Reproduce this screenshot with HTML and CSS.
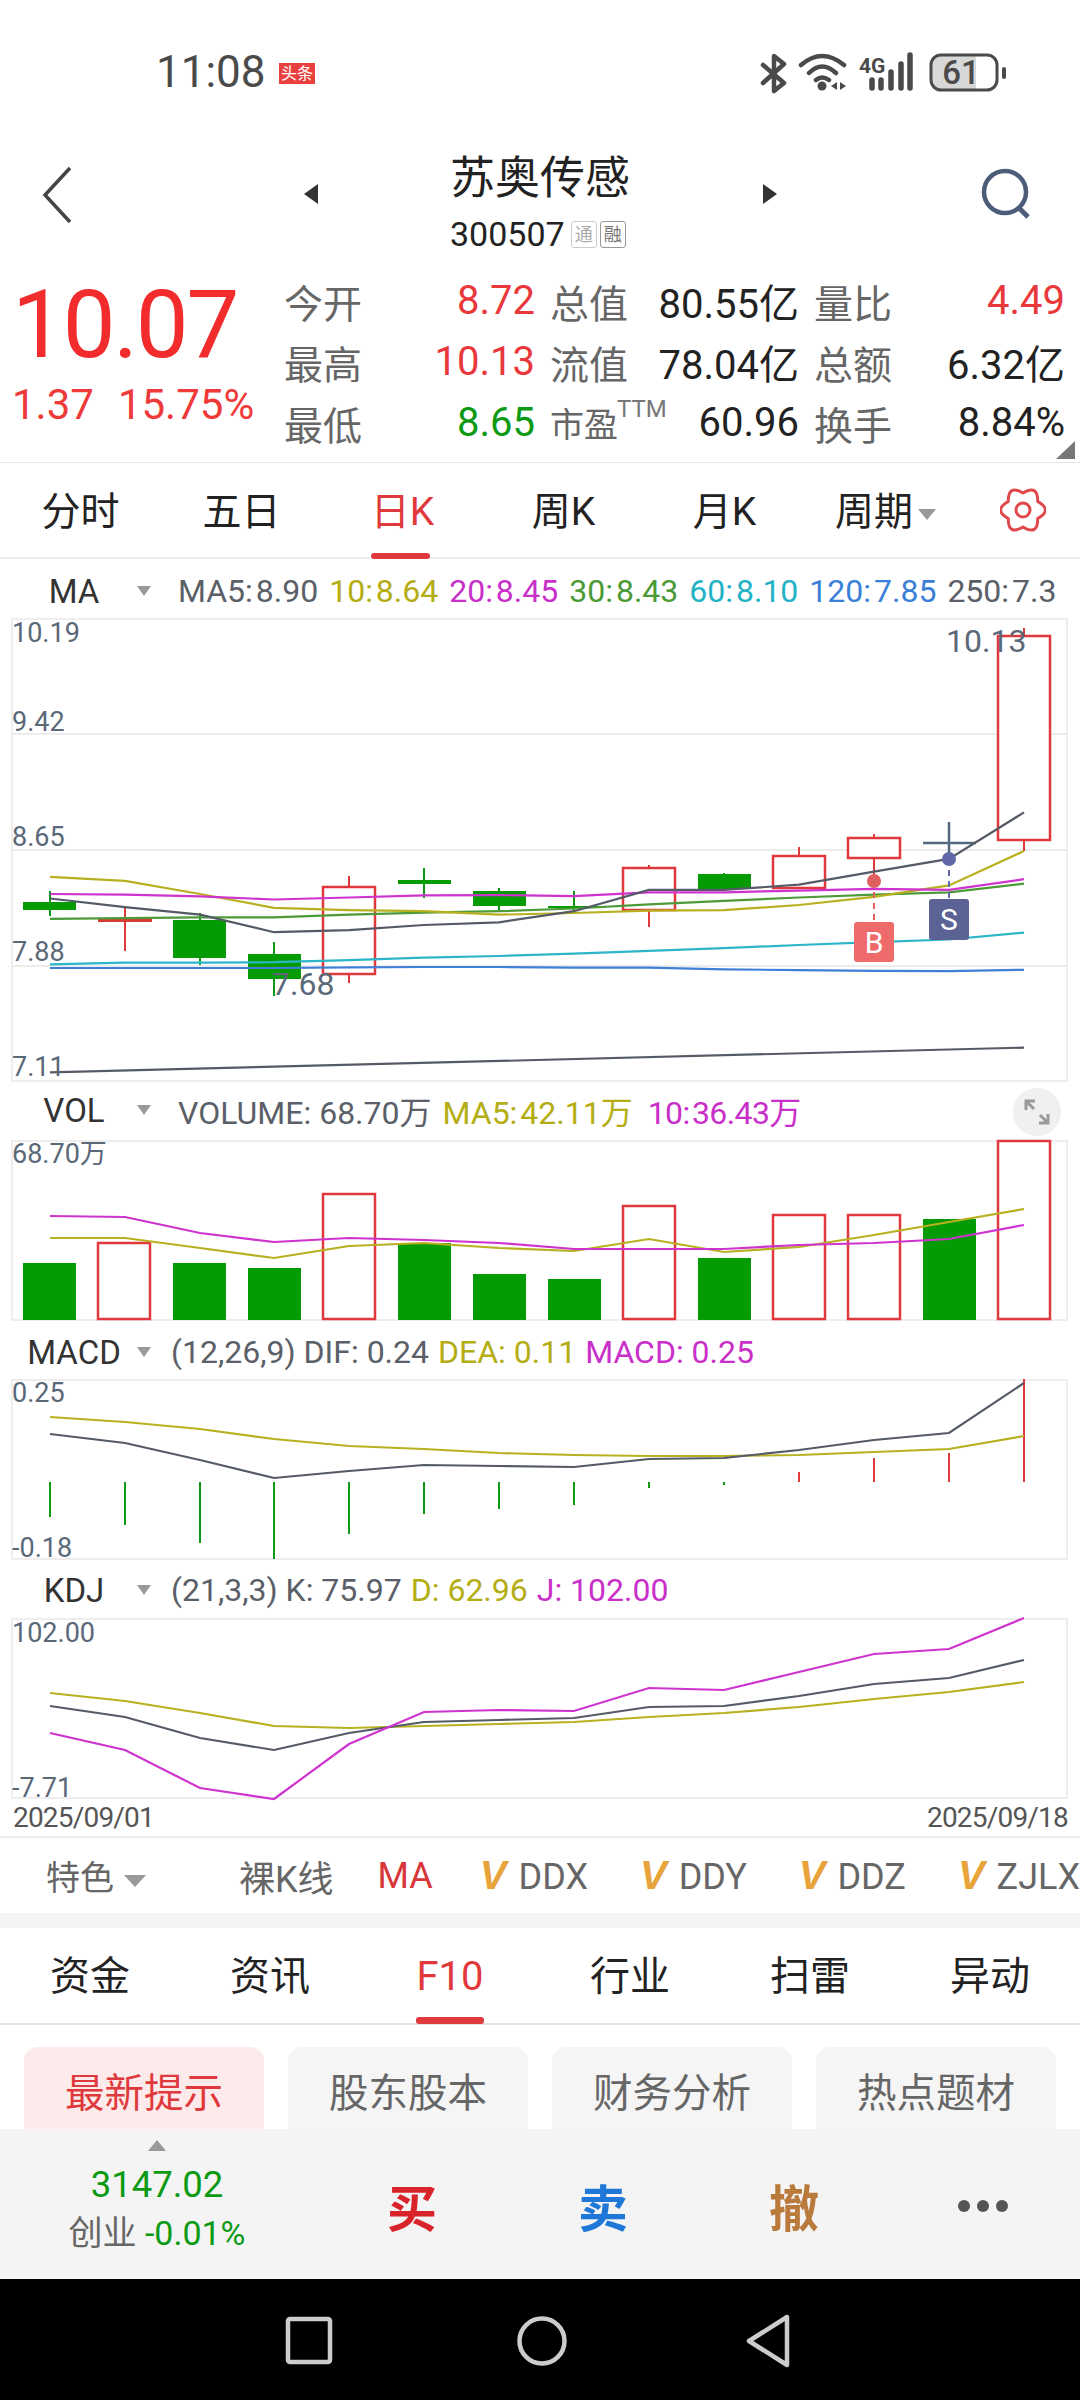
FILE: index.html
```html
<!DOCTYPE html>
<html lang="zh-CN">
<head>
<meta charset="UTF-8">
<title>苏奥传感</title>
<link rel="stylesheet" href="styles.css">
</head>
<body>

<div class="statusbar">
    <span class="clock">11:08</span>
    <span class="toutiao">头条</span>
    <svg class="status-icons" width="250" height="50" viewBox="0 0 250 50">
        <path d="M3 15L24 33L14 41V6L24 14L3 33" fill="none" stroke="#4a4a4a" stroke-width="4.5" stroke-linecap="round" stroke-linejoin="round"/>
        <path d="M41 15Q62 -3 84 15M49 23Q62 10 76 23M56 30Q62 25 69 30" fill="none" stroke="#4a4a4a" stroke-width="4.5" stroke-linecap="round"/>
        <circle cx="62" cy="36" r="4.5" fill="#4a4a4a"/>
        <path d="M77 32V40L71 36ZM80 32V40L86 36Z" fill="#4a4a4a"/>
        <text class="net-text" x="99" y="23">4G</text>
        <path d="M112 30V38M121 30V38M131 22V38M141 14V38M150 5V38" fill="none" stroke="#4a4a4a" stroke-width="5.5" stroke-linecap="round"/>
        <path d="M180 5.5H216V39.5H180A9 9 0 0 1 171 30.5V14.5A9 9 0 0 1 180 5.5Z" fill="#d8d8d8"/>
        <rect x="171" y="5" width="66" height="35" rx="10" fill="none" stroke="#4a4a4a" stroke-width="3"/>
        <text class="batt-text" x="201" y="34">61</text>
        <rect x="242" y="17" width="4" height="12" rx="2" fill="#4a4a4a"/>
    </svg>
</div>

<div class="titlebar">
    <svg class="back" width="32" height="58" viewBox="0 0 32 58"><path d="M29 2L4 29L29 56" fill="none" stroke="#444" stroke-width="3.5"/></svg>
    <span class="arrow-left"></span>
    <div class="stock-name">
        <div class="name">苏奥传感</div>
        <div class="code">300507<span class="tag">通</span><span class="tag tag-dark">融</span></div>
    </div>
    <span class="arrow-right"></span>
    <svg class="search" width="56" height="56" viewBox="0 0 56 56"><circle cx="27" cy="26" r="21" fill="none" stroke="#4d5c78" stroke-width="4.5"/><path d="M40 41L50 51" stroke="#4d5c78" stroke-width="5" fill="none"/></svg>
</div>

<div class="quote">
    <div class="price-box">
        <div class="price">10.07</div>
        <div class="change"><span>1.37</span><span>15.75%</span></div>
    </div>
    <div class="stats">
        <span class="lab">今开</span><span class="val red">8.72</span>
        <span class="lab">总值</span><span class="val">80.55亿</span>
        <span class="lab">量比</span><span class="val red">4.49</span>
        <span class="lab">最高</span><span class="val red">10.13</span>
        <span class="lab">流值</span><span class="val">78.04亿</span>
        <span class="lab">总额</span><span class="val">6.32亿</span>
        <span class="lab">最低</span><span class="val green">8.65</span>
        <span class="lab lab-ttm">市盈<sup>TTM</sup></span><span class="val">60.96</span>
        <span class="lab">换手</span><span class="val">8.84%</span>
    </div>
    <span class="corner"></span>
</div>

<div class="period-tabs">
    <span class="tab">分时</span>
    <span class="tab">五日</span>
    <span class="tab tab-on">日K</span>
    <span class="tab">周K</span>
    <span class="tab">月K</span>
    <span class="tab">周期<i class="tri tri-tab"></i></span>
    <svg class="gear" width="46" height="46" viewBox="0 0 46 46">
        <path d="M23 6Q38 -3 37.7 14.5Q53 23 37.7 31.5Q38 49 23 40Q8 49 8.3 31.5Q-7 23 8.3 14.5Q8 -3 23 6Z" fill="none" stroke="#e0484c" stroke-width="3" stroke-linejoin="round"/>
        <circle cx="23" cy="23" r="7" fill="none" stroke="#e0484c" stroke-width="3"/>
    </svg>
</div>

<div class="legend legend-ma">
    <span class="ind">MA</span><i class="tri"></i>
    <div class="vals vals-close">
        <span class="c-gray">MA5: 8.90</span>
        <span class="c-olive">10: 8.64</span>
        <span class="c-pink">20: 8.45</span>
        <span class="c-grn">30: 8.43</span>
        <span class="c-cyan">60: 8.10</span>
        <span class="c-blue">120: 7.85</span>
        <span class="c-gray">250: 7.3</span>
    </div>
</div>
<svg class="chart" width="1080" height="464" viewBox="0 618 1080 464">
    <rect class="frame" x="12" y="619" width="1055" height="462"/>
    <path class="grid" d="M12 734H1067M12 850H1067M12 966H1067"/>

    <path class="wick-g" d="M50 891V916M200 913V965M274 942V996M424 868V898M499 888V911M574 891V912M724 873V889"/>
    <path class="wick-r" d="M125 907V951M349 876V887M349 974V983M649 865V868M649 910V927M799 847V856M874 834V838M874 858V881M1024 628V636M1024 840V851"/>
    <g class="fill-g">
        <rect x="23" y="902" width="53" height="8"/>
        <rect x="173" y="920" width="53" height="38"/>
        <rect x="248" y="954" width="53" height="25"/>
        <rect x="398" y="880" width="53" height="4"/>
        <rect x="473" y="891" width="53" height="15"/>
        <rect x="548" y="906" width="53" height="2"/>
        <rect x="698" y="874" width="53" height="15"/>
    </g>
    <rect x="98" y="919" width="54" height="3" fill="#d93a32"/>
    <g class="hollow">
        <rect x="323" y="887" width="52" height="87"/>
        <rect x="623" y="868" width="52" height="42"/>
        <rect x="773" y="856" width="52" height="32"/>
        <rect x="848" y="838" width="52" height="20"/>
        <rect x="998" y="636" width="52" height="204"/>
    </g>
    <path d="M949 822V859M923 843H976" stroke="#566782" stroke-width="2.5" fill="none"/>

    <polyline class="ln l-cyan" points="50,964.3 125,962.6 200,962.6 274,962.2 349,960.1 424,957.7 499,956 574,953.6 649,950.8 724,948.1 799,945 874,942.2 949,939.5 1024,932.6"/>
    <polyline class="ln l-blue" points="50,968 125,968 200,968 274,968 349,967.4 424,967 499,967 574,967.7 649,967.7 724,969.4 799,970.1 874,970.8 949,971.2 1024,969.8"/>
    <polyline class="ln l-dark" points="50,1072.4 1024,1047.6"/>
    <polyline class="ln l-grn" points="50,918.8 125,918.1 200,917.4 274,917.4 349,914.7 424,912.6 499,911.2 574,908.5 649,904.4 724,900.9 799,897.5 874,894.7 949,892.3 1024,883.7"/>
    <polyline class="ln l-olive" points="50,876.8 125,880.9 200,894 274,907.8 349,910.2 424,911.2 499,914.7 574,913 649,910.6 724,910.2 799,905 874,896.8 949,885.4 1024,851"/>
    <polyline class="ln l-pink" points="50,894 125,894.7 200,896.4 274,899.5 349,897.5 424,895.4 499,895.1 574,896.1 649,892.3 724,892.3 799,890.6 874,888.9 949,889.9 1024,879.2"/>
    <polyline class="ln l-dark" points="50,898.5 125,907.1 200,914.7 274,932.2 349,930.2 424,925 499,922.3 574,911.2 649,889.9 724,889.9 799,884.7 874,871.6 949,858.9 1024,812.4"/>

    <path d="M874 881V922" stroke="#e0605f" stroke-width="2" stroke-dasharray="6 5" fill="none"/>
    <ellipse cx="874" cy="881" rx="7" ry="7" fill="#e0605f"/>
    <rect x="854" y="922" width="40" height="40" rx="3" fill="#ef6b6b"/>
    <text class="mark" x="874" y="953">B</text>
    <path d="M949 859V899" stroke="#6068a8" stroke-width="2" stroke-dasharray="6 5" fill="none"/>
    <ellipse cx="949" cy="859" rx="7" ry="7" fill="#6068a8"/>
    <rect x="929" y="899" width="40" height="41" rx="3" fill="#5b6294"/>
    <text class="mark" x="949" y="930">S</text>

    <text class="axis" x="12" y="642">10.19</text>
    <text class="axis" x="12" y="731">9.42</text>
    <text class="axis" x="12" y="846">8.65</text>
    <text class="axis" x="12" y="961">7.88</text>
    <text class="axis" x="12" y="1076">7.11</text>
    <text class="peak" x="946" y="652">10.13</text>
    <text class="peak" x="272" y="995">7.68</text>
</svg>

<div class="legend legend-vol">
    <span class="ind">VOL</span><i class="tri"></i>
    <div class="vals vals-close vals-vol">
        <span class="c-gray">VOLUME: 68.70万</span>
        <span class="c-olive">MA5: 42.11万</span>
        <span class="c-pink">10: 36.43万</span>
    </div>
    <span class="expand">
        <svg width="28" height="28" viewBox="0 0 28 28"><path d="M3 12V3H12M3 3L11 11M25 16V25H16M25 25L17 17" fill="none" stroke="#999" stroke-width="3"/></svg>
    </span>
</div>
<svg class="chart" width="1080" height="181" viewBox="0 1140 1080 181">
    <rect class="frame" x="12" y="1141" width="1055" height="179"/>
    <g class="fill-g">
        <rect x="23" y="1263" width="53" height="57"/>
        <rect x="173" y="1263" width="53" height="57"/>
        <rect x="248" y="1268" width="53" height="52"/>
        <rect x="398" y="1243" width="53" height="77"/>
        <rect x="473" y="1274" width="53" height="46"/>
        <rect x="548" y="1279" width="53" height="41"/>
        <rect x="698" y="1258" width="53" height="62"/>
        <rect x="923" y="1219" width="53" height="101"/>
    </g>
    <g class="hollow">
        <rect x="98" y="1243" width="52" height="76"/>
        <rect x="323" y="1194" width="52" height="125"/>
        <rect x="623" y="1206" width="52" height="113"/>
        <rect x="773" y="1215" width="52" height="104"/>
        <rect x="848" y="1215" width="52" height="104"/>
        <rect x="998" y="1141" width="52" height="178"/>
    </g>
    <polyline class="ln l-olive" points="50,1238 125,1238 200,1248 274,1258 349,1246 424,1243 499,1248 574,1251 649,1239 724,1252 799,1247 874,1235 949,1222 1024,1209"/>
    <polyline class="ln l-pink" points="50,1216 125,1217 200,1233 274,1242 349,1238 424,1240 499,1243 574,1249 649,1249 724,1249 799,1245 874,1243 949,1239 1024,1225"/>
    <text class="axis" x="12" y="1163">68.70万</text>
</svg>

<div class="legend legend-macd">
    <span class="ind">MACD</span><i class="tri"></i>
    <div class="vals vals-tight">
        <span class="c-gray">(12,26,9) DIF: 0.24</span>
        <span class="c-olive">DEA: 0.11</span>
        <span class="c-pink">MACD: 0.25</span>
    </div>
</div>
<svg class="chart" width="1080" height="181" viewBox="0 1379 1080 181">
    <rect class="frame" x="12" y="1380" width="1055" height="179"/>
    <path class="bar-g" d="M50 1482V1517M125 1482V1525M200 1482V1543M274 1482V1559M349 1482V1534M424 1482V1514M499 1482V1509M574 1482V1505M649 1482V1488M724 1482V1485"/>
    <path class="bar-r" d="M799 1482V1472M874 1482V1458M949 1482V1453M1024 1482V1379"/>
    <polyline class="ln l-olive" points="50,1417 125,1422 200,1429 274,1439 349,1446 424,1449 499,1453 574,1455 649,1456 724,1456 799,1455 874,1452 949,1449 1024,1436"/>
    <polyline class="ln l-dark" points="50,1434 125,1443 200,1460 274,1478 349,1471 424,1465 499,1466 574,1467 649,1459 724,1458 799,1450 874,1440 949,1433 1024,1383"/>
    <text class="axis" x="12" y="1402">0.25</text>
    <text class="axis" x="12" y="1557">-0.18</text>
</svg>

<div class="legend legend-kdj">
    <span class="ind">KDJ</span><i class="tri"></i>
    <div class="vals vals-tight">
        <span class="c-gray">(21,3,3) K: 75.97</span>
        <span class="c-olive">D: 62.96</span>
        <span class="c-pink">J: 102.00</span>
    </div>
</div>
<svg class="chart" width="1080" height="181" viewBox="0 1618 1080 181">
    <rect class="frame" x="12" y="1619" width="1055" height="179"/>
    <polyline class="ln l-olive" points="50,1693 125,1701 200,1713 274,1726 349,1728 424,1726 499,1724 574,1722 649,1717 724,1713 799,1707 874,1699 949,1692 1024,1682"/>
    <polyline class="ln l-dark" points="50,1706 125,1717 200,1738 274,1750 349,1733 424,1722 499,1720 574,1718 649,1707 724,1706 799,1696 874,1684 949,1678 1024,1660"/>
    <polyline class="ln l-pink" points="50,1733 125,1750 200,1788 274,1799 349,1744 424,1712 499,1710 574,1711 649,1688 724,1690 799,1672 874,1654 949,1649 1024,1618"/>
    <text class="axis" x="12" y="1642">102.00</text>
    <text class="axis" x="12" y="1797">-7.71</text>
</svg>

<div class="dates"><span>2025/09/01</span><span>2025/09/18</span></div>

<div class="features">
    <span class="feat-main">特色<i class="tri tri-feat"></i></span>
    <span class="feat-sep"></span>
    <span class="feat feat-plain">裸K线</span>
    <span class="feat feat-on">MA</span>
    <span class="feat"><b class="vip">V</b>DDX</span>
    <span class="feat"><b class="vip">V</b>DDY</span>
    <span class="feat"><b class="vip">V</b>DDZ</span>
    <span class="feat"><b class="vip">V</b>ZJLX</span>
</div>

<div class="band"></div>

<div class="info-tabs">
    <span class="itab">资金</span>
    <span class="itab">资讯</span>
    <span class="itab itab-on">F10</span>
    <span class="itab">行业</span>
    <span class="itab">扫雷</span>
    <span class="itab">异动</span>
</div>

<div class="subtabs">
    <span class="sub sub-on">最新提示</span>
    <span class="sub">股东股本</span>
    <span class="sub">财务分析</span>
    <span class="sub">热点题材</span>
</div>

<div class="tradebar">
    <div class="index-box">
        <i class="tri-up"></i>
        <div class="idx-val">3147.02</div>
        <div class="idx-sub">创业 <span>-0.01%</span></div>
    </div>
    <span class="act act-buy">买</span>
    <span class="act act-sell">卖</span>
    <span class="act act-undo">撤</span>
    <span class="more"><i></i><i></i><i></i></span>
</div>

<div class="navbar">
    <svg width="48" height="50" viewBox="0 0 48 50"><rect x="3" y="3" width="42" height="43" rx="2" fill="none" stroke="#ccc" stroke-width="4.5"/></svg>
    <svg width="52" height="52" viewBox="0 0 52 52"><circle cx="26" cy="26" r="22.5" fill="none" stroke="#ccc" stroke-width="4.5"/></svg>
    <svg class="nav-back" width="46" height="54" viewBox="0 0 46 54"><path d="M42 3V51L4 27Z" fill="none" stroke="#ccc" stroke-width="4.5" stroke-linejoin="round"/></svg>
</div>

</body>
</html>
```

FILE: styles.css
```css
* {
    box-sizing: border-box;
}
body {
    margin: 0;
    width: 1080px;
    height: 2400px;
    overflow: hidden;
    background-color: #fff;
    font-family: Roboto, "Noto Sans CJK SC", sans-serif;
    color: #222;
}
i {
    font-style: normal;
}

/* status bar */
.statusbar {
    height: 130px;
    padding: 14px 0 0 156px;
    display: flex;
    align-items: center;
}
.clock {
    font-size: 44px;
    color: #4a4a4a;
    width: 123px;
}
.toutiao {
    width: 36px;
    height: 21px;
    line-height: 21px;
    margin-top: 3px;
    background-color: #e8403f;
    color: #fff;
    font-size: 16px;
    text-align: center;
}
.status-icons {
    margin-left: 445px;
    margin-top: 6px;
}
.net-text {
    font-size: 21px;
    font-weight: 700;
    fill: #4a4a4a;
}
.batt-text {
    font-size: 33px;
    font-weight: 500;
    fill: #4a4a4a;
    text-anchor: middle;
}

/* title */
.titlebar {
    height: 150px;
    display: flex;
    align-items: flex-start;
    padding-left: 41px;
}
.back {
    margin-top: 36px;
}
.arrow-left, .arrow-right {
    width: 0;
    height: 0;
    margin-top: 54px;
    border-top: 10px solid transparent;
    border-bottom: 10px solid transparent;
}
.arrow-left {
    border-right: 14px solid #333;
    margin-left: 231px;
}
.arrow-right {
    border-left: 14px solid #333;
    margin-left: 133px;
}
.stock-name {
    margin-left: 132px;
    width: 180px;
}
.name {
    font-size: 45px;
    line-height: 60px;
    margin-top: 19px;
    color: #222;
}
.code {
    font-size: 34px;
    line-height: 40px;
    margin-top: 5px;
    display: flex;
    align-items: center;
    white-space: nowrap;
}
.tag {
    width: 26px;
    height: 27px;
    line-height: 25px;
    margin-left: 3px;
    border: 1px solid #ccc;
    border-radius: 3px;
    font-size: 18px;
    color: #aaa;
    text-align: center;
}
.tag:first-of-type {
    margin-left: 6px;
}
.tag-dark {
    color: #777;
    border-color: #999;
}
.search {
    margin-left: 201px;
    margin-top: 36px;
}

/* price + stats */
.quote {
    height: 183px;
    display: flex;
    position: relative;
    border-bottom: 1px solid #e6e6e6;
}
.price-box {
    width: 284px;
    padding-left: 12px;
}
.price {
    font-size: 94px;
    line-height: 94px;
    margin-top: -2px;
    color: #f22c2c;
    letter-spacing: -2.2px;
}
.change {
    display: flex;
    gap: 24px;
    font-size: 42px;
    line-height: 50px;
    margin-top: 8px;
    color: #ef3a3a;
    white-space: nowrap;
}
.stats {
    display: grid;
    grid-template-columns: 78px 188px 78px 186px 78px 178px;
    grid-auto-rows: 61px;
    margin-top: -10px;
    align-items: center;
    white-space: nowrap;
}
.lab {
    font-size: 39px;
    color: #666;
}
.val {
    font-size: 40px;
    text-align: right;
    color: #222;
    margin-right: 15px;
}
.val:nth-child(6n) {
    margin-right: 5px;
}
.red {
    color: #e8383c;
}
.green {
    color: #0c9a14;
}
.lab-ttm {
    font-size: 34px;
    position: relative;
}
.lab-ttm sup {
    position: absolute;
    left: 67px;
    top: -4px;
    font-size: 24px;
    line-height: 30px;
    color: #777;
}
.corner {
    position: absolute;
    right: 5px;
    bottom: 3px;
    border-left: 19px solid transparent;
    border-bottom: 18px solid #777;
}

/* period tabs */
.period-tabs {
    height: 96px;
    display: grid;
    grid-template-columns: repeat(6, 161px) 1fr;
    align-items: center;
    border-bottom: 2px solid #eee;
    font-size: 39px;
    line-height: 48px;
    padding: 3px 34px 0 0;
}
.tab {
    justify-self: center;
    white-space: nowrap;
    position: relative;
    color: #222;
}
.tab-on {
    color: #e0393d;
}
.tab-on::after {
    content: "";
    position: absolute;
    left: 0;
    right: 4px;
    bottom: -23px;
    height: 6px;
    border-radius: 3px;
    background-color: #e0393d;
}
.gear {
    justify-self: end;
    margin-top: -3px;
}

/* triangles next to labels */
.tri {
    width: 0;
    height: 0;
    flex-shrink: 0;
    display: inline-block;
    border-left: 7px solid transparent;
    border-right: 7px solid transparent;
    border-top: 10px solid #999;
}
.tri-tab {
    margin-left: 5px;
    vertical-align: middle;
    border-left-width: 9px;
    border-right-width: 9px;
    border-top-width: 11px;
}
.tri-feat {
    margin-left: 10px;
    vertical-align: middle;
    border-left-width: 11px;
    border-right-width: 11px;
    border-top-width: 12px;
}

/* indicator legends */
.legend {
    display: flex;
    align-items: center;
    position: relative;
    white-space: nowrap;
}
.legend-ma {
    height: 59px;
    padding-top: 5px;
}
.legend-vol {
    height: 58px;
    padding-bottom: 2px;
}
.legend-macd {
    height: 58px;
    padding-top: 4px;
}
.legend-kdj {
    height: 58px;
    padding-top: 2px;
}
.ind {
    width: 148px;
    flex-shrink: 0;
    text-align: center;
    font-size: 33px;
    color: #333;
}
.legend .tri {
    margin-left: -11px;
}
.vals {
    display: flex;
    gap: 11px;
    margin-left: 27px;
    font-size: 32px;
}
.vals-close {
    word-spacing: -5px;
}
.vals-vol span:first-child {
    word-spacing: 0;
}
.vals-vol span:last-child {
    margin-left: 4px;
    letter-spacing: -0.6px;
}
.vals-tight {
    margin-left: 20px;
    gap: 9px;
}
.c-gray { color: #5b6068; }
.c-olive { color: #b4ad14; }
.c-pink { color: #c92fc9; }
.c-grn { color: #4a9a35; }
.c-cyan { color: #22b2c6; }
.c-blue { color: #3a7fd8; }
.expand {
    position: absolute;
    left: 1013px;
    top: 6px;
    width: 48px;
    height: 48px;
    border-radius: 50%;
    background-color: #f0f0f0;
    display: flex;
    align-items: center;
    justify-content: center;
}

/* charts */
.chart {
    display: block;
    overflow: visible;
}
.frame {
    fill: none;
    stroke: #eee;
    stroke-width: 2;
}
.grid {
    fill: none;
    stroke: #e6e6e6;
    stroke-width: 1.5;
}
.wick-g, .bar-g {
    fill: none;
    stroke: #0c9a14;
    stroke-width: 2;
}
.wick-r, .bar-r {
    fill: none;
    stroke: #e0393d;
    stroke-width: 2;
}
.fill-g rect {
    fill: #049b04;
}
.hollow rect {
    fill: #fff;
    stroke: #e0393d;
    stroke-width: 2.5;
}
.ln {
    fill: none;
    stroke-width: 2.2;
}
.l-dark { stroke: #555b66; }
.l-olive { stroke: #b8b020; }
.l-pink { stroke: #cf33cf; }
.l-grn { stroke: #4d9a38; }
.l-cyan { stroke: #2cb5c8; }
.l-blue { stroke: #3f7fd8; }
.axis {
    font-size: 27px;
    fill: #5a6878;
}
.peak {
    font-size: 32px;
    fill: #5a6878;
}
.mark {
    font-size: 30px;
    fill: #fff;
    text-anchor: middle;
}

/* date row + feature row */
.dates {
    height: 39px;
    display: flex;
    justify-content: space-between;
    align-items: center;
    padding: 0 12px 0 13px;
    font-size: 28px;
    letter-spacing: -0.8px;
    color: #555;
    border-bottom: 2px solid #eee;
}
.features {
    height: 75px;
    display: flex;
    align-items: center;
    white-space: nowrap;
    overflow: hidden;
    padding-left: 46px;
    font-size: 36px;
    color: #666;
}
.feat-main {
    font-size: 34px;
}
.feat-sep {
    width: 1px;
    height: 40px;
    margin: 0 46px 0 47px;
    background-color: #eee;
}
.feat {
    margin-right: 52px;
}
.feat-plain {
    margin-right: 44px;
}
.feat-on {
    color: #d9363a;
    margin-right: 47px;
}
.vip {
    font-family: "Liberation Sans", sans-serif;
    font-size: 40px;
    font-style: italic;
    color: #e8a33a;
    margin-right: 12px;
}
.band {
    height: 15px;
    background-color: #f4f4f4;
}

/* info tabs */
.info-tabs {
    height: 97px;
    display: grid;
    grid-template-columns: repeat(6, 180px);
    align-items: center;
    font-size: 40px;
    line-height: 50px;
    padding-top: 3px;
    border-bottom: 2px solid #e4e4e4;
}
.itab {
    justify-self: center;
    position: relative;
    color: #222;
}
.itab-on {
    color: #e0393d;
}
.itab-on::after {
    content: "";
    position: absolute;
    left: 0;
    right: 0;
    bottom: -22px;
    height: 7px;
    border-radius: 3px;
    background-color: #e0393d;
}
.subtabs {
    height: 104px;
    overflow: hidden;
    display: flex;
    gap: 24px;
    padding: 22px 24px 0;
}
.sub {
    width: 240px;
    height: 100px;
    padding-top: 14px;
    border-radius: 14px 14px 0 0;
    background-color: #f5f5f5;
    color: #666;
    font-size: 39.5px;
    text-align: center;
}
.sub-on {
    background-color: #fdeaea;
    color: #e0393d;
}

/* bottom trade bar */
.tradebar {
    height: 150px;
    background-color: #f4f4f4;
    display: flex;
    align-items: center;
}
.index-box {
    width: 314px;
    align-self: flex-start;
    text-align: center;
    padding-top: 11px;
}
.tri-up {
    display: block;
    width: 0;
    height: 0;
    margin: 0 auto;
    border-left: 9px solid transparent;
    border-right: 9px solid transparent;
    border-bottom: 11px solid #999;
}
.idx-val {
    font-size: 36.5px;
    line-height: 48px;
    margin-top: 10px;
    color: #0c9a14;
}
.idx-sub {
    font-size: 34px;
    line-height: 48px;
    color: #666;
}
.idx-sub span {
    color: #0c9a14;
}
.act {
    font-size: 50px;
    font-weight: 700;
    width: 56px;
    margin-top: 2px;
    text-align: center;
}
.act-buy {
    color: #d9232a;
    margin-left: 70px;
}
.act-sell {
    color: #1f78d8;
    margin-left: 135px;
}
.act-undo {
    color: #b97a3c;
    margin-left: 135px;
}
.more {
    margin-left: 136px;
    margin-top: 4px;
    display: flex;
    gap: 7px;
}
.more i {
    width: 12px;
    height: 12px;
    border-radius: 50%;
    background-color: #555;
}

/* android nav */
.navbar {
    height: 121px;
    background-color: #000;
    display: flex;
    align-items: center;
    padding: 2px 0 0 285px;
    gap: 183px;
}
.nav-back {
    margin-left: -6px;
}
```
